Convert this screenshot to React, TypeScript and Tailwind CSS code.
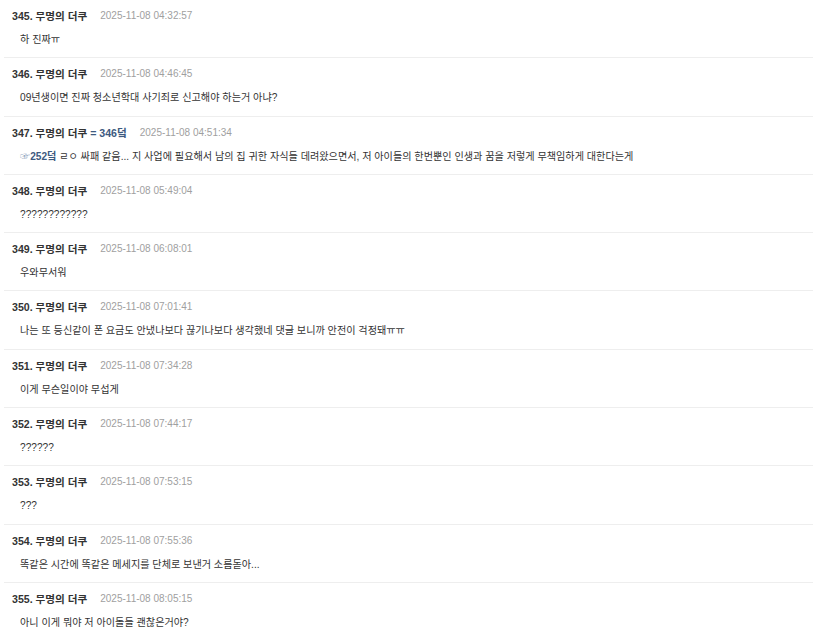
type Comment = {
  no: number;
  time: string;
  body: string;
  replyTo?: string;
  quote?: string;
};

const comments: Comment[] = [
  { no: 345, time: "2025-11-08 04:32:57", body: "하 진짜ㅠ" },
  { no: 346, time: "2025-11-08 04:46:45", body: "09년생이면 진짜 청소년학대 사기죄로 신고해야 하는거 아냐?" },
  {
    no: 347,
    time: "2025-11-08 04:51:34",
    replyTo: "346덬",
    quote: "252덬",
    body: " ㄹㅇ 싸패 같음... 지 사업에 필요해서 남의 집 귀한 자식들 데려왔으면서, 저 아이들의 한번뿐인 인생과 꿈을 저렇게 무책임하게 대한다는게",
  },
  { no: 348, time: "2025-11-08 05:49:04", body: "????????????" },
  { no: 349, time: "2025-11-08 06:08:01", body: "우와무서워" },
  { no: 350, time: "2025-11-08 07:01:41", body: "나는 또 등신같이 폰 요금도 안냈나보다 끊기나보다 생각했네 댓글 보니까 안전이 걱정돼ㅠㅠ" },
  { no: 351, time: "2025-11-08 07:34:28", body: "이게 무슨일이야 무섭게" },
  { no: 352, time: "2025-11-08 07:44:17", body: "??????" },
  { no: 353, time: "2025-11-08 07:53:15", body: "???" },
  { no: 354, time: "2025-11-08 07:55:36", body: "똑같은 시간에 똑같은 메세지를 단체로 보낸거 소름돋아..." },
  { no: 355, time: "2025-11-08 08:05:15", body: "아니 이게 뭐야 저 아이돌들 괜찮은거야?" },
];

const font = "font-['Liberation_Sans','Noto_Sans_CJK_KR',sans-serif]";

const CommentRow = ({ c }: { c: Comment }) => (
  <li className="border-b border-[#eeeeee] pt-[9px] pb-[10.3px] pl-[8px]">
    <div className="flex items-center leading-[14px]">
      <span className="text-[10.6px] font-bold text-[#333333]">
        {c.no}. 무명의 더쿠
        {c.replyTo && <span className="text-[#3d5a80]"> = {c.replyTo}</span>}
      </span>
      <span className="ml-[13px] text-[10px] text-[#a0a0a0]">{c.time}</span>
    </div>
    <p className="mt-[10px] pl-[8px] text-[10.15px] leading-[14px] text-[#333333]">
      {c.quote && (
        <>
          <span className="text-[#8aa0bb]">☞</span>
          <span className="font-bold text-[#3d5a80]">{c.quote}</span>
        </>
      )}
      {c.body}
    </p>
  </li>
);

const App = () => {
  return (
    <div className={`min-h-screen bg-white ${font}`}>
      <ul className="ml-[4px] w-[809px]">
        {comments.map((c) => (
          <CommentRow key={c.no} c={c} />
        ))}
      </ul>
    </div>
  );
};

export default App;
